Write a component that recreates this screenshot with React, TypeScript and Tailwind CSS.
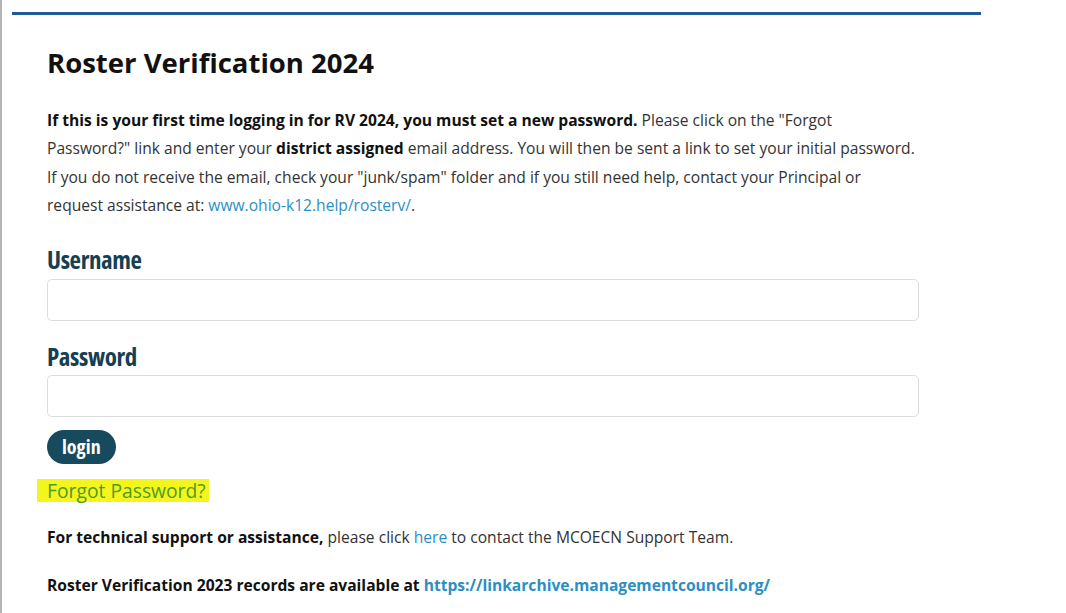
export default function App() {
  return (
    <div className="min-h-[613px] w-[1066px] bg-white font-['Open_Sans',sans-serif] text-[#333]">
      <div className="flex min-h-[613px]">
        <div className="w-[2px] shrink-0 bg-[#b4b4b4]" />
        <div className="w-[979px] pl-[10px]">
          <div className="mt-[12px] h-[3px] bg-[#1d5a9a]" />
          <div className="pl-[35px] pr-[62px]">
            <h1 className="mt-[30px] text-[27.5px] font-bold leading-[36px] text-[#111]">
              Roster Verification 2024
            </h1>
            <p className="mt-[25px] whitespace-nowrap text-[15.6px] leading-[28.3px]">
              <b className="text-[#111]">
                If this is your first time logging in for RV 2024, you must set a new password.
              </b>{" "}
              Please click on the "Forgot
              <br />
              Password?" link and enter your <b className="text-[#111]">district assigned</b> email
              address. You will then be sent a link to set your initial password.
              <br />
              If you do not receive the email, check your "junk/spam" folder and if you still need
              help, contact your Principal or
              <br />
              request assistance at: <span className="text-[#2b8fc4]">www.ohio-k12.help/rosterv/</span>.
            </p>

            <label className="mt-[25px] block text-[25px] font-bold leading-[30px] tracking-[-0.4px] text-[#173f52] [font-stretch:75%]">
              Username
            </label>
            <div className="mt-[5px] h-[42px] rounded-[5px] border border-[#dcdcdc]" />

            <label className="mt-[20px] block text-[25px] font-bold leading-[30px] tracking-[-0.4px] text-[#173f52] [font-stretch:75%]">
              Password
            </label>
            <div className="mt-[4px] h-[42px] rounded-[5px] border border-[#dcdcdc]" />

            <button className="mt-[13px] h-[34px] rounded-full bg-[#174a5c] px-[15px] text-[20px] font-bold leading-[34px] text-white [font-stretch:75%]">
              login
            </button>

            <div className="mt-[15px] flex">
              <span className="-ml-[10px] block h-[23px] bg-[#f5f51e] pl-[10px] pr-[3px] text-[19.3px] leading-[23px] text-[#4f9b22]">
                Forgot Password?
              </span>
            </div>

            <p className="mt-[21px] text-[15.6px] leading-[28px]">
              <b className="text-[#111]">For technical support or assistance,</b> please click{" "}
              <span className="text-[#2b8fc4]">here</span> to contact the MCOECN Support Team.
            </p>
            <p className="mt-[20px] text-[15.6px] font-bold leading-[28px] text-[#111]">
              Roster Verification 2023 records are available at{" "}
              <span className="text-[#2b8fc4]">https://linkarchive.managementcouncil.org/</span>
            </p>
          </div>
        </div>
      </div>
    </div>
  );
}
